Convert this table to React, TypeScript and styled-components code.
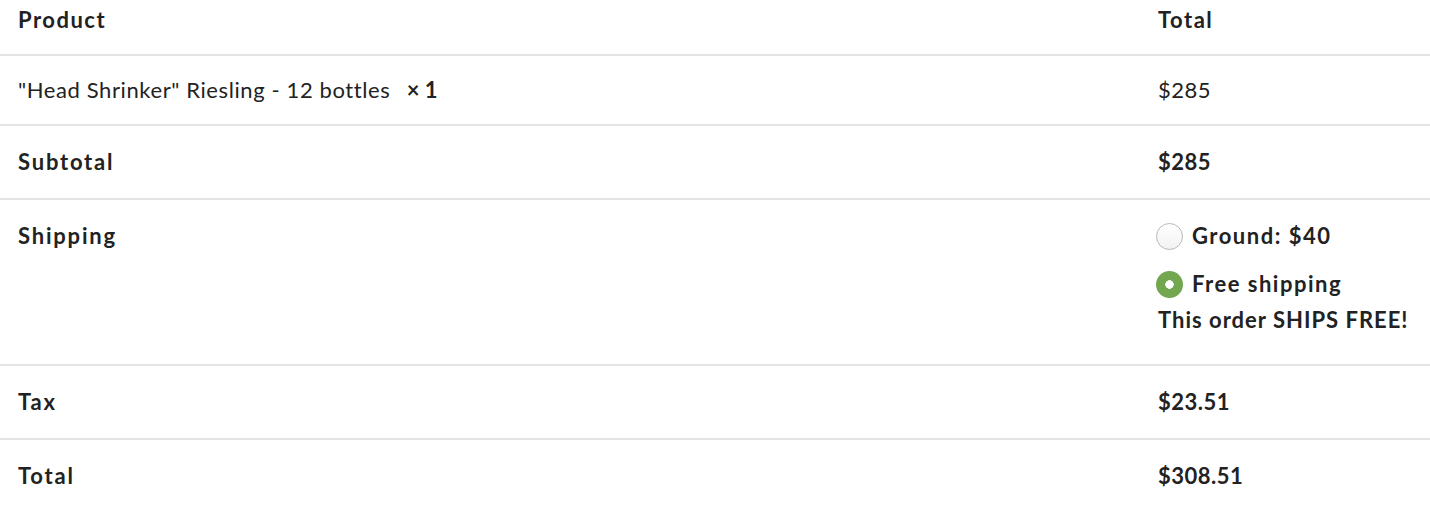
import styled, { createGlobalStyle } from 'styled-components';

const GlobalStyle = createGlobalStyle`
  body {
    margin: 0;
    background: #fff;
    font-family: Lato, 'Open Sans', sans-serif;
    color: #222;
  }
`;

const App = () => {
  return (
    <>
      <GlobalStyle />
      <S.Table>
        <thead>
          <tr>
            <S.HeadCell>Product</S.HeadCell>
            <S.HeadCell>Total</S.HeadCell>
          </tr>
        </thead>
        <tbody>
          <S.Row>
            <S.Cell $compact>
              "Head Shrinker" Riesling - 12 bottles <S.Qty>× 1</S.Qty>
            </S.Cell>
            <S.Cell $compact $amount>$285</S.Cell>
          </S.Row>
          <S.Row>
            <S.Cell $bold>Subtotal</S.Cell>
            <S.Cell $bold $amount>$285</S.Cell>
          </S.Row>
          <S.Row>
            <S.Cell $bold $top>Shipping</S.Cell>
            <S.Cell $bold>
              <S.MethodList>
                <S.Method>
                  <S.Radio />
                  Ground: $40
                </S.Method>
                <S.Method>
                  <S.Radio $checked />
                  Free shipping
                </S.Method>
              </S.MethodList>
              <S.Note>This order SHIPS FREE!</S.Note>
            </S.Cell>
          </S.Row>
          <S.Row>
            <S.Cell $bold>Tax</S.Cell>
            <S.Cell $bold $amount>$23.51</S.Cell>
          </S.Row>
          <S.Row>
            <S.Cell $bold>Total</S.Cell>
            <S.Cell $bold $amount>$308.51</S.Cell>
          </S.Row>
        </tbody>
      </S.Table>
    </>
  );
};
export default App;

const Table = styled.table`
  width: 100%;
  border-collapse: collapse;
  font-size: 22px;
  line-height: 30px;
  letter-spacing: 0.6px;
`;

const HeadCell = styled.th`
  text-align: left;
  font-weight: 700;
  letter-spacing: 1.5px;
  padding: 5px 18px 19px;
  border-bottom: 2px solid #e4e4e4;
  &:first-child {
    width: 1104px;
  }
`;

const Row = styled.tr`
  & + & td {
    border-top: 2px solid #e4e4e4;
  }
`;

const Cell = styled.td<{
  $bold?: boolean;
  $top?: boolean;
  $compact?: boolean;
  $amount?: boolean;
}>`
  padding: ${({ $compact }) => ($compact ? '19px 18px' : '21px 18px')};
  font-weight: ${({ $bold }) => ($bold ? 700 : 400)};
  letter-spacing: ${({ $bold, $amount }) =>
    $amount ? '0.5px' : $bold ? '1.8px' : '0.6px'};
  vertical-align: ${({ $top }) => ($top ? 'top' : 'middle')};
`;

const Qty = styled.strong`
  margin-left: 10px;
  font-weight: 700;
  letter-spacing: 0;
`;

const MethodList = styled.ul`
  list-style: none;
  margin: 0;
  padding: 0;
  display: flex;
  flex-direction: column;
  gap: 18px;
`;

const Method = styled.li`
  display: flex;
  align-items: center;
  gap: 9px;
  margin-left: -2px;
  letter-spacing: 1.5px;
`;

const Radio = styled.span<{ $checked?: boolean }>`
  width: 27px;
  height: 27px;
  border-radius: 50%;
  box-sizing: border-box;
  flex-shrink: 0;
  background: ${({ $checked }) =>
    $checked
      ? 'radial-gradient(circle, #fff 0 4px, #72a74f 4.5px)'
      : 'linear-gradient(#fff, #f2f2f2)'};
  border: ${({ $checked }) => ($checked ? 'none' : '1.5px solid #b8b8b8')};
`;

const Note = styled.p`
  margin: 6px 0 8px;
  letter-spacing: 1px;
`;

const S = {
  Table,
  HeadCell,
  Row,
  Cell,
  Qty,
  MethodList,
  Method,
  Radio,
  Note
};
